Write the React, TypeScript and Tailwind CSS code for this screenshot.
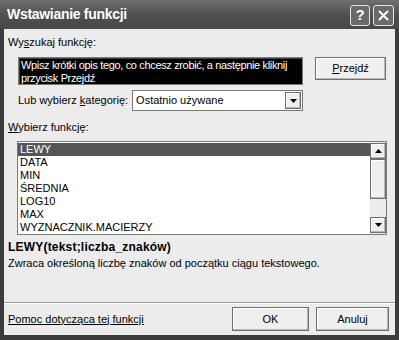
import { ReactNode } from "react";

const font = { fontFamily: '"Liberation Sans", Arial, sans-serif' };

const items = ["LEWY", "DATA", "MIN", "ŚREDNIA", "LOG10", "MAX", "WYZNACZNIK.MACIERZY"];

const Btn = ({ children, className }: { children: ReactNode; className?: string }) => (
	<div
		className={`flex items-center justify-center bg-[#efefef] border border-[#6f6f6f] shadow-[inset_-1px_-1px_0_#b8b8b8,inset_1px_1px_0_#ffffff] text-[11px] text-black ${className ?? ""}`}
	>
		{children}
	</div>
);

const Arrow = ({ down }: { down?: boolean }) => (
	<svg width="7" height="4" viewBox="0 0 7 4">
		<path d={down ? "M0 0h7L3.5 4z" : "M0 4h7L3.5 0z"} fill="#000" />
	</svg>
);

const App = () => {
	return (
		<div className="w-[399px] h-[340px] bg-[#3c3c3c] flex flex-col select-none" style={font}>
			{/* title bar */}
			<div className="h-[29px] flex items-center pl-[7px] pr-[5px] bg-gradient-to-b from-[#707070] via-[#505050] to-[#474747]">
				<span className="text-white font-bold text-[14px] tracking-[-0.3px] flex-1">Wstawianie funkcji</span>
				<div className="flex gap-[3px] mt-[1px]">
					<div className="w-[20px] h-[21px] rounded-[3px] border border-[#e6e6e6] bg-[#6a6a6a] flex items-center justify-center text-white font-bold text-[15px]">
						?
					</div>
					<div className="w-[21px] h-[21px] rounded-[3px] border border-[#e6e6e6] bg-[#6a6a6a] flex items-center justify-center">
						<svg width="11" height="11" viewBox="0 0 11 11">
							<path d="M1 1l9 9M10 1l-9 9" stroke="#fff" strokeWidth="2" />
						</svg>
					</div>
				</div>
			</div>

			{/* body */}
			<div className="flex-1 mx-[4px] mb-[5px] bg-[#ececec] flex flex-col text-[11px] leading-[13px] text-black">
				<div className="mt-[7px] ml-[4px]">
					Wy<span className="underline">s</span>zukaj funkcję:
				</div>

				<div className="mt-[8px] ml-[14px] flex">
					<div className="w-[285px] h-[28px] bg-black border border-[#7a7a7a] shadow-[inset_1px_1px_0_#404040] text-white px-[2px] pt-[1px] leading-[13px] tracking-[-0.35px] whitespace-nowrap overflow-hidden">
						Wpisz krótki opis tego, co chcesz zrobić, a następnie kliknij
						<br />
						przycisk Przejdź
					</div>
					<Btn className="ml-[12px] w-[71px] h-[23px]">
						<span>
							<span className="underline">P</span>rzejdź
						</span>
					</Btn>
				</div>

				<div className="mt-[5px] ml-[14px] flex items-center">
					<span>
						Lub wybierz <span className="underline">k</span>ategorię:
					</span>
					<div className="ml-[4px] w-[171px] h-[21px] bg-white border border-[#7a7a7a] flex items-center">
						<span className="flex-1 pl-[3px]">Ostatnio używane</span>
						<Btn className="w-[16px] h-[17px] mr-[1px]">
							<Arrow down />
						</Btn>
					</div>
				</div>

				<div className="mt-[10px] ml-[4px]">
					<span className="underline">W</span>ybierz funkcję:
				</div>

				<div className="mt-[7px] ml-[13px] w-[370px] h-[94px] bg-white border border-[#7a7a7a] flex">
					<div className="flex-1 flex flex-col pt-[1px]">
						{items.map((it, i) => (
							<div
								key={it}
								className={`h-[13px] px-[2px] leading-[13px] ${i === 0 ? "bg-[#555555] text-white" : ""}`}
							>
								{it}
							</div>
						))}
					</div>
					<div className="w-[16px] flex flex-col bg-[repeating-conic-gradient(#e4e4e4_0_25%,#f6f6f6_0_50%)] bg-[length:2px_2px]">
						<Btn className="h-[16px] mt-[1px]">
							<Arrow />
						</Btn>
						<Btn className="h-[40px]">
							<span />
						</Btn>
						<div className="flex-1" />
						<Btn className="h-[16px] mb-[1px]">
							<Arrow down />
						</Btn>
					</div>
				</div>

				<div className="mt-[5px] ml-[4px] font-bold text-[12px] leading-[14px] tracking-[0.2px]">LEWY(tekst;liczba_znaków)</div>
				<div className="mt-[3px] ml-[4px]">Zwraca określoną liczbę znaków od początku ciągu tekstowego.</div>

				<div className="flex-1" />
				<div className="h-[2px] border-t border-[#9a9a9a] border-b-[#ffffff] border-b" />

				<div className="flex items-center mt-[3px] mb-[4px] pl-[4px] pr-[6px]">
					<span className="underline flex-1">Pomoc dotycząca tej funkcji</span>
					<Btn className="w-[77px] h-[24px]">OK</Btn>
					<Btn className="ml-[7px] w-[73px] h-[24px]">Anuluj</Btn>
				</div>
			</div>
		</div>
	);
};

export default App;
